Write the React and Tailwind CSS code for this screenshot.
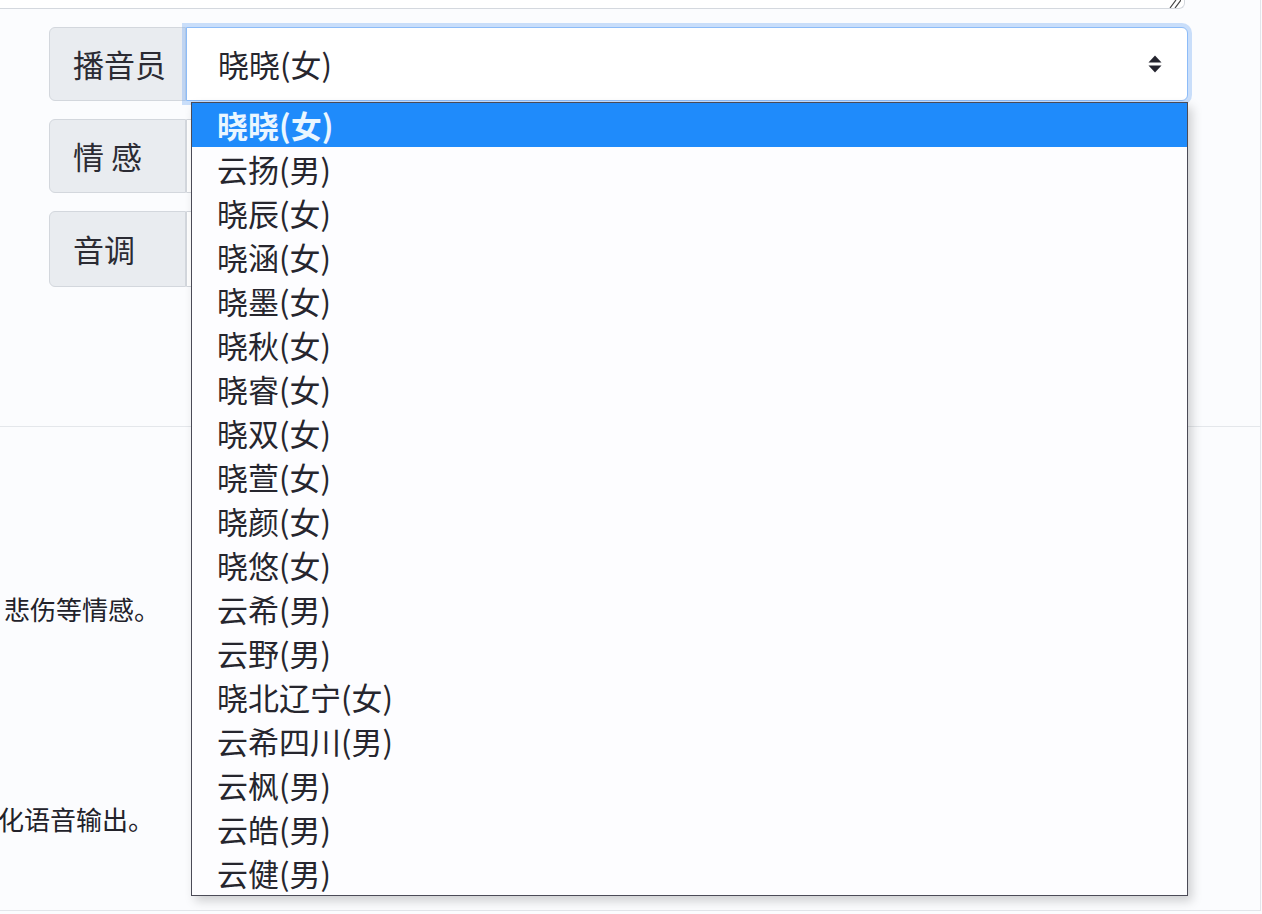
import React from "react";

const voices = [
  "晓晓(女)",
  "云扬(男)",
  "晓辰(女)",
  "晓涵(女)",
  "晓墨(女)",
  "晓秋(女)",
  "晓睿(女)",
  "晓双(女)",
  "晓萱(女)",
  "晓颜(女)",
  "晓悠(女)",
  "云希(男)",
  "云野(男)",
  "晓北辽宁(女)",
  "云希四川(男)",
  "云枫(男)",
  "云皓(男)",
  "云健(男)",
];

function SortArrows() {
  return (
    <svg width="16" height="20" viewBox="0 0 16 20" className="text-[#24242e]">
      <path d="M8 1.5 L14.5 8.5 H1.5 Z" fill="currentColor" />
      <path d="M8 18.5 L14.5 11.5 H1.5 Z" fill="currentColor" />
    </svg>
  );
}

function Row({ label, children, active, tall }) {
  return (
    <div className={`flex ${tall ? "h-[76px]" : "h-[74px]"}`}>
      <div className="flex w-[137px] shrink-0 items-center rounded-l-md border border-[#d3d7dd] bg-[#e9ecf0] pl-[23px] text-[31px] text-[#2b2b33]">
        {label}
      </div>
      <div
        className={`relative flex flex-1 items-center rounded-r-md border bg-white pl-[31px] pr-[24px] text-[31px] text-[#26262e] ${
          active ? "z-10 border-[#8dbcf8] ring-4 ring-[#7fb2f5]/40" : "border-[#d3d7dd]"
        }`}
      >
        {children}
      </div>
    </div>
  );
}

export default function App() {
  return (
    <div className="min-h-screen bg-[#fbfcfe] font-['Noto_Sans_CJK_SC','Microsoft_YaHei',sans-serif]">
      <div className="relative flex h-[911px] w-[1261px] flex-col border-r border-b border-[#e2e5ea]">
        {/* bottom of the text box above */}
        <div className="relative h-[9px] w-[1185px] rounded-br-md border-r border-b border-[#d4d8de] bg-white">
          <svg width="14" height="8" viewBox="0 0 14 8" className="absolute right-[3px] top-0">
            <path d="M3 8 L9 0 M8 8 L14 0" stroke="#444" strokeWidth="1.2" />
          </svg>
        </div>

        <div className="flex w-[1188px] flex-col gap-[18px] pl-[49px] pt-[18px]">
          <Row label="播音员" active>
            <span className="flex-1">晓晓(女)</span>
            <SortArrows />
          </Row>
          <Row label="情 感" />
          <Row label="音调" tall />
        </div>

        <div className="mt-[139px] border-t border-[#e4e7eb]" />

        <div className="flex flex-col text-[26px] text-[#22222a]">
          <p className="mt-[165px] pl-[4px] leading-[34px]">悲伤等情感。</p>
          <p className="mt-[176px] -ml-[2px] leading-[34px]">化语音输出。</p>
        </div>

        {/* open dropdown list */}
        <div className="absolute left-[191px] top-[102px] z-20 w-[997px] border border-[#4b4b57] bg-[#fdfdff] shadow-[4px_5px_10px_rgba(0,0,0,0.18)]">
          {voices.map((v, i) => (
            <div
              key={v}
              className={`flex h-[44px] items-center pl-[25px] text-[31px] ${
                i === 0 ? "bg-[#1f8bfb] font-bold text-[#eaf6ff]" : "text-[#26262e]"
              }`}
            >
              {v}
            </div>
          ))}
        </div>
      </div>
    </div>
  );
}
